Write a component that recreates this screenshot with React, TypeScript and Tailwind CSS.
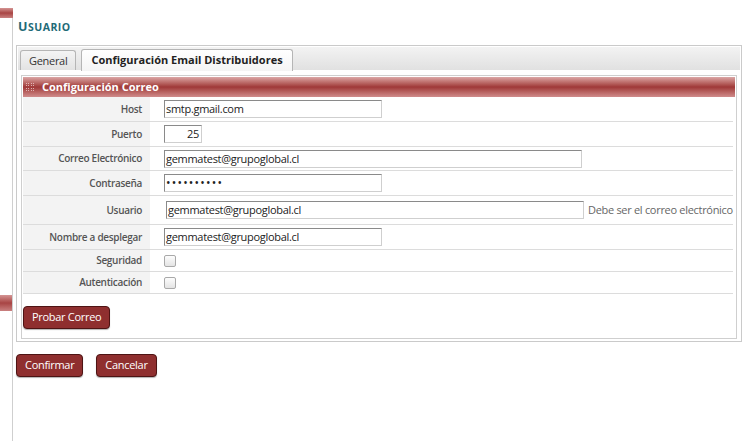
const rows = [
  { label: 'Host', h: 'h-[25px]', kind: 'text', value: 'smtp.gmail.com', w: 'w-[218px]' },
  { label: 'Puerto', h: 'h-[25px]', kind: 'port', value: '25', w: 'w-[38px]' },
  { label: 'Correo Electrónico', h: 'h-[24px]', kind: 'text', value: 'gemmatest@grupoglobal.cl', w: 'w-[418px]' },
  { label: 'Contraseña', h: 'h-[25px]', kind: 'password', value: '••••••••••', w: 'w-[218px]' },
  { label: 'Usuario', h: 'h-[29px]', kind: 'user', value: 'gemmatest@grupoglobal.cl', w: 'w-[418px]' },
  { label: 'Nombre a desplegar', h: 'h-[25px]', kind: 'text', value: 'gemmatest@grupoglobal.cl', w: 'w-[218px]' },
  { label: 'Seguridad', h: 'h-[22px]', kind: 'check', value: '', w: '' },
  { label: 'Autenticación', h: 'h-[22px]', kind: 'check', value: '', w: '' },
];

function Field({ value, w, right }: { value: string; w: string; right?: boolean }) {
  return (
    <div
      className={`${w} h-[18px] border border-t-[#8a8a8a] border-l-[#8a8a8a] border-r-[#cfcfcf] border-b-[#cfcfcf] bg-white px-[1px] text-[11px] leading-[16px] tracking-[-0.3px] text-[#222] ${right ? 'text-right pr-[2px]' : ''}`}
    >
      {value}
    </div>
  );
}

function Checkbox() {
  return (
    <div className="h-[12px] w-[12px] rounded-[2px] border border-[#a9a9a9] bg-gradient-to-b from-[#fdfdfd] to-[#e4e4e4]" />
  );
}

function RedButton({ children }: { children: string }) {
  return (
    <button className="h-[23px] rounded-[4px] border border-[#4e1414] bg-[#8f2f2f] px-[8px] text-[11px] leading-[20px] tracking-[-0.3px] text-white shadow-[0_1px_1px_rgba(0,0,0,0.3)]">
      {children}
    </button>
  );
}

export default function App() {
  return (
    <div className="flex min-h-[441px] bg-white text-[#333]" style={{ fontFamily: '"Open Sans", "Noto Sans", sans-serif' }}>
      {/* left rail */}
      <div className="flex w-[13px] shrink-0 flex-col">
        <div className="mt-[8px] h-[10px] w-[13px] bg-gradient-to-b from-[#d49494] via-[#a84444] to-[#c98080]" />
        <div className="flex flex-1 flex-col border-r border-[#cfcfcf]">
          <div className="mt-[277px] h-[16px] w-[12px] bg-gradient-to-b from-[#d49494] via-[#a84444] to-[#c98080]" />
        </div>
      </div>

      {/* main */}
      <div className="flex-1 pl-[3px] pr-[3px]">
        <div className="mt-[19px] flex h-[16px] items-baseline pl-[2px] font-bold leading-[16px] tracking-[0.5px] text-[#1f6b78]">
          <span className="text-[12.5px]">U</span>
          <span className="text-[10.5px]">SUARIO</span>
        </div>

        {/* tabs */}
        <div className="mt-[10px] border border-[#cacaca] p-[1px]">
          <div className="flex h-[23px] items-end gap-[5px] bg-gradient-to-b from-[#f3f3f3] to-[#e1e1e1] pl-[2px]">
            <div className="h-[20px] rounded-t-[3px] border border-b-0 border-[#b5b5b5] bg-gradient-to-b from-[#f4f4f4] to-[#e3e3e3] px-[8px] text-[11px] leading-[19px] tracking-[-0.3px] text-[#333]">
              General
            </div>
            <div className="relative top-[1px] h-[22px] rounded-t-[3px] border border-b-0 border-[#b5b5b5] bg-gradient-to-b from-[#ffffff] to-[#f4f4f4] px-[9px] text-[11px] font-bold leading-[20px] text-[#222]">
              Configuración Email Distribuidores
            </div>
          </div>

          {/* panel */}
          <div className="bg-white px-[3px] pb-[1px] pt-[5px]">
            <div className="border border-[#cfcfcf] p-[1px]">
              <div className="flex h-[20px] items-center bg-gradient-to-b from-[#dba6a6] via-[#9f3838] to-[#d08c8c] pl-[3px]">
                <div className="grid h-[9px] w-[8px] grid-cols-4 gap-[1px] opacity-70">
                  {Array.from({ length: 16 }).map((_, i) => (
                    <div key={i} className="h-[1px] w-[1px] bg-[#f3dcdc]" />
                  ))}
                </div>
                <span className="ml-[8px] text-[11px] font-bold text-white">Configuración Correo</span>
              </div>

              <div className="pr-[2px]">
                {rows.map((r) => (
                  <div key={r.label} className={`flex ${r.h} border-b border-[#dcdcdc]`}>
                    <div className="flex w-[127px] shrink-0 items-center justify-end bg-[#f3f3f3] pr-[8px] text-[10px] font-semibold tracking-[-0.3px] text-[#555]">
                      {r.label}
                    </div>
                    <div className="flex flex-1 items-center pl-[14px]">
                      {r.kind === 'check' ? (
                        <Checkbox />
                      ) : r.kind === 'user' ? (
                        <>
                          <div className="pl-[2px]">
                            <Field value={r.value} w={r.w} />
                          </div>
                          <span className="ml-[4px] whitespace-nowrap text-[11px] tracking-[-0.3px] text-[#666]">Debe ser el correo electrónico</span>
                        </>
                      ) : r.kind === 'password' ? (
                        <div className={`${r.w} h-[18px] border border-t-[#8a8a8a] border-l-[#8a8a8a] border-r-[#cfcfcf] border-b-[#cfcfcf] px-[1px] text-[12px] leading-[16px] tracking-[1.2px] text-[#222]`}>
                          {r.value}
                        </div>
                      ) : (
                        <Field value={r.value} w={r.w} right={r.kind === 'port'} />
                      )}
                    </div>
                  </div>
                ))}
              </div>

              <div className="pb-[8px] pt-[9px]">
                <RedButton>Probar Correo</RedButton>
              </div>
            </div>
          </div>
        </div>

        <div className="mt-[12px] flex gap-[13px]">
          <RedButton>Confirmar</RedButton>
          <RedButton>Cancelar</RedButton>
        </div>
      </div>
    </div>
  );
}
